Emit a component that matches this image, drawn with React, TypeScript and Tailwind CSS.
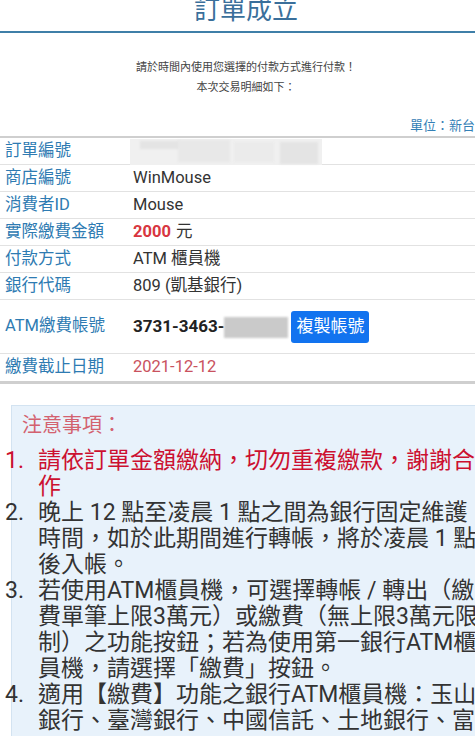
import React from "react";

function Row({ label, children, h = "h-[27px]" }: { label: string; children: React.ReactNode; h?: string }) {
  return (
    <div className={`flex items-center border-b border-[#e2e2e2] ${h}`}>
      <div className="w-[128px] shrink-0 pl-[5px] text-[16.5px] text-[#2e7bb2] whitespace-nowrap">{label}</div>
      <div className="pl-[5px] text-[16.5px] text-[#333] whitespace-nowrap flex items-center">{children}</div>
    </div>
  );
}

export default function App() {
  const font = { fontFamily: 'Roboto, "Noto Sans CJK TC", "Noto Sans", sans-serif' };
  return (
    <div className="w-[475px] h-[736px] overflow-hidden bg-white" style={font}>
      <div className="w-[492px]">
        <div className="mt-[-3px] h-[26px] text-center text-[26px] leading-[26px] text-[#3a6f9b]">訂單成立</div>
        <div className="mt-[8px] h-[2px] bg-[#3f7fa8]" />
        <div className="mt-[25px] text-center text-[11px] leading-[20px] text-[#444]">
          <div>請於時間內使用您選擇的付款方式進行付款！</div>
          <div>本次交易明細如下：</div>
        </div>
        <div className="mt-[20px] text-right pr-[4px] text-[13px] leading-[16px] text-[#3480b6] whitespace-nowrap">單位：新台幣</div>
        <div className="mt-[2px] border-t-[2px] border-b-[3px] border-[#cfcfcf]">
          <Row label="訂單編號">
            <div className="relative w-[192px] h-[27px] -ml-[3px]">
              <div className="absolute left-0 top-[1px] w-[192px] h-[26px] bg-[#f0f0f0]" />
              <div className="absolute left-[10px] top-[3px] w-[40px] h-[8px] bg-[#e4e4e4] blur-[1px]" />
              <div className="absolute left-[48px] top-[2px] w-[52px] h-[22px] bg-[#e8e8e8] blur-[1px]" />
              <div className="absolute left-[104px] top-[4px] w-[40px] h-[20px] bg-[#ebebeb] blur-[1px]" />
              <div className="absolute left-[150px] top-[4px] w-[38px] h-[22px] bg-[#e4e4e4] blur-[1px]" />
            </div>
          </Row>
          <Row label="商店編號">WinMouse</Row>
          <Row label="消費者ID">Mouse</Row>
          <Row label="實際繳費金額">
            <span className="font-bold text-[#d8363f]">2000</span>
            <span className="ml-[5px]">元</span>
          </Row>
          <Row label="付款方式">ATM 櫃員機</Row>
          <Row label="銀行代碼">809 (凱基銀行)</Row>
          <Row label="ATM繳費帳號" h="h-[54px]">
            <span className="font-bold text-[17px] text-[#222]">3731-3463-</span>
            <span className="block w-[64px] h-[21px] bg-[#cacaca] blur-[1px] mt-[1px]" />
            <span className="ml-[3px] inline-flex items-center justify-center w-[78px] h-[32px] rounded-[3px] bg-[#1273ef] text-white text-[17px]">
              複製帳號
            </span>
          </Row>
          <div className="flex items-center h-[27px]">
            <div className="w-[128px] shrink-0 pl-[5px] text-[16.5px] text-[#2e7bb2] whitespace-nowrap">繳費截止日期</div>
            <div className="pl-[5px] text-[16.5px] text-[#c9525e]">2021-12-12</div>
          </div>
        </div>

        <div className="mt-[21px] ml-[11px] border border-[#d3e3f1] bg-[#e8f2fb] pt-[5px] pb-[20px]">
          <div className="pl-[10px] text-[20px] leading-[28px] text-[#d3616f]">注意事項：</div>
          <div className="mt-[9px] text-[23px] leading-[26px] text-[#333] whitespace-nowrap">
            <div className="flex -ml-[7px] text-[#cc1030]">
              <span className="w-[33px] shrink-0">1.</span>
              <span>請依訂單金額繳納，切勿重複繳款，謝謝合<br />作</span>
            </div>
            <div className="flex -ml-[7px]">
              <span className="w-[33px] shrink-0">2.</span>
              <span>晚上 12 點至凌晨 1 點之間為銀行固定維護<br />時間，如於此期間進行轉帳，將於凌晨 1 點<br />後入帳。</span>
            </div>
            <div className="flex -ml-[7px]">
              <span className="w-[33px] shrink-0">3.</span>
              <span>若使用ATM櫃員機，可選擇轉帳 / 轉出（繳<br />費單筆上限3萬元）或繳費（無上限3萬元限<br />制）之功能按鈕；若為使用第一銀行ATM櫃<br />員機，請選擇「繳費」按鈕。</span>
            </div>
            <div className="flex -ml-[7px]">
              <span className="w-[33px] shrink-0">4.</span>
              <span>適用【繳費】功能之銀行ATM櫃員機：玉山<br />銀行、臺灣銀行、中國信託、土地銀行、富</span>
            </div>
          </div>
        </div>
      </div>
    </div>
  );
}
